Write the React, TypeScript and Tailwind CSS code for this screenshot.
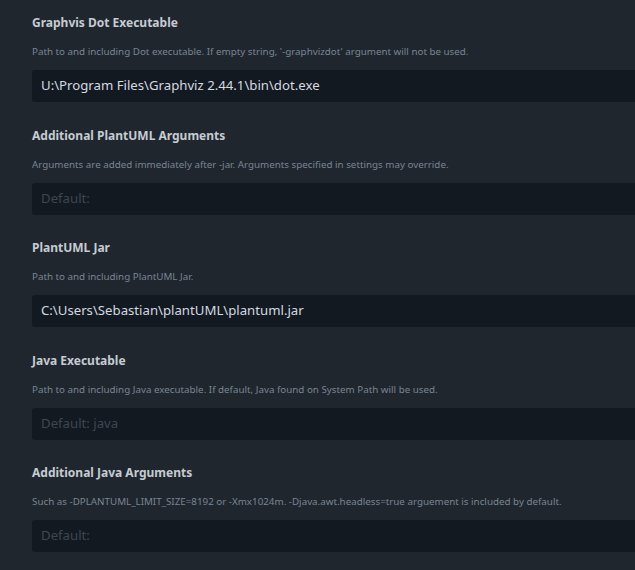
const settings = [
  {
    title: "Graphvis Dot Executable",
    desc: "Path to and including Dot executable. If empty string, '-graphvizdot' argument will not be used.",
    value: "U:\\Program Files\\Graphviz 2.44.1\\bin\\dot.exe",
    placeholder: "Default:",
  },
  {
    title: "Additional PlantUML Arguments",
    desc: "Arguments are added immediately after -jar. Arguments specified in settings may override.",
    value: "",
    placeholder: "Default:",
  },
  {
    title: "PlantUML Jar",
    desc: "Path to and including PlantUML Jar.",
    value: "C:\\Users\\Sebastian\\plantUML\\plantuml.jar",
    placeholder: "Default:",
  },
  {
    title: "Java Executable",
    desc: "Path to and including Java executable. If default, Java found on System Path will be used.",
    value: "",
    placeholder: "Default: java",
  },
  {
    title: "Additional Java Arguments",
    desc: "Such as -DPLANTUML_LIMIT_SIZE=8192 or -Xmx1024m. -Djava.awt.headless=true arguement is included by default.",
    value: "",
    placeholder: "Default:",
  },
];

export default function App() {
  return (
    <div
      className="w-[635px] h-[570px] overflow-hidden bg-[#20262e] pl-8 pt-[13px]"
      style={{ fontFamily: '"Noto Sans", "Open Sans", sans-serif' }}
    >
      {settings.map((s) => (
        <div key={s.title} className="h-[112.5px]">
          <div className="text-[12px] font-bold leading-5 text-[#c5ccd3]">{s.title}</div>
          <div className="mt-[11px] text-[9.8px] leading-4 text-[#788592] whitespace-nowrap">{s.desc}</div>
          <div className="mt-[10px] h-[32px] w-[640px] rounded-[3px] bg-[#131921] pl-[9px] flex items-center">
            {s.value ? (
              <span className="text-[13.2px] text-[#d5dae0]">{s.value}</span>
            ) : (
              <span className="text-[13.2px] text-[#3e4650]">{s.placeholder}</span>
            )}
          </div>
        </div>
      ))}
    </div>
  );
}
